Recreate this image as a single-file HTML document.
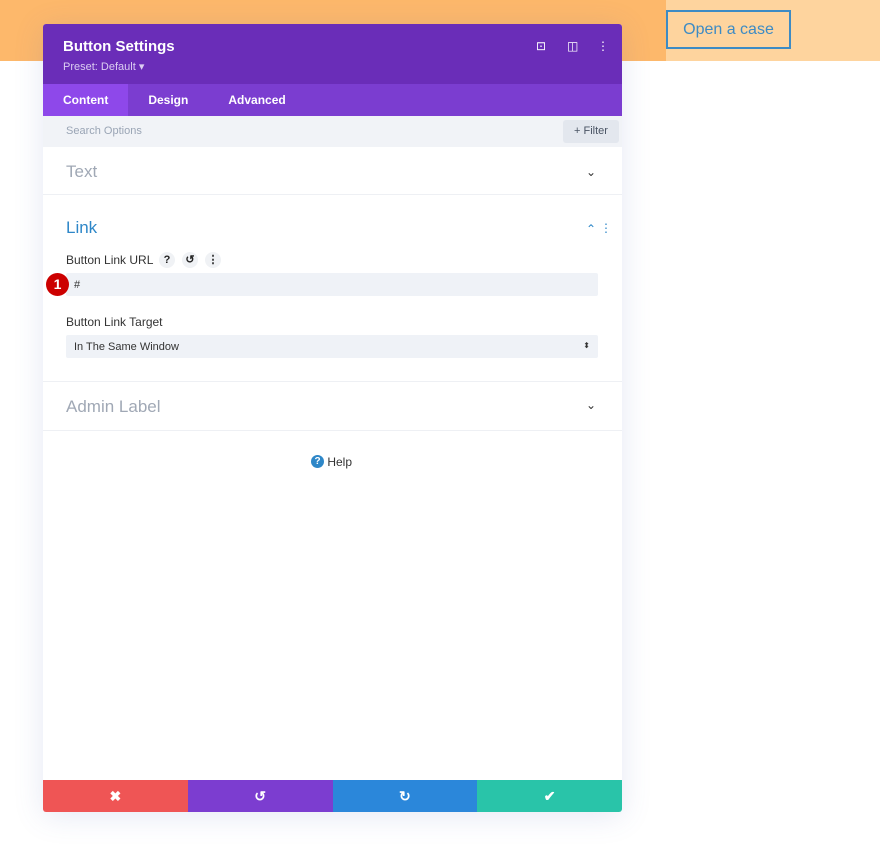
<!DOCTYPE html>
<html><head><style>
*{margin:0;padding:0;box-sizing:border-box}
body{width:880px;height:853px;background:#fff;font-family:"Liberation Sans",sans-serif;position:relative;overflow:hidden}
.top{position:absolute;left:0;top:0;width:666px;height:61px;background:#fdb86b}
.topr{position:absolute;left:666px;top:0;width:214px;height:61px;background:#fed49e}
.case{position:absolute;left:666px;top:10px;width:125px;height:39px;border:2px solid #3d8bc4;color:#3d8bc4;font-size:16px;text-align:center;line-height:35px}
.panel{position:absolute;left:43px;top:24px;width:579px;height:788px;background:#fff;box-shadow:0 4px 30px rgba(80,100,180,.15);border-radius:3px;overflow:hidden}
.hd{height:60px;background:#6a2db8;color:#fff;padding:14px 20px;position:relative}
.hd h1{font-size:15px;font-weight:bold}
.hd p{font-size:11px;color:#dccdf2;margin-top:5px}
.hi{position:absolute;top:15px;font-size:12px;color:#fff}
.tabs{height:32px;background:#7b3dd0;display:flex;color:#fff;font-size:12px;font-weight:bold}
.tabs div{padding:0 20px;line-height:32px}
.tabs .a{background:#8e48ea}
.search{height:31px;background:#f1f3f7;position:relative;font-size:11px;color:#9aa5b5;padding:9px 23px}
.filter{position:absolute;right:3px;top:4px;width:56px;height:23px;background:#e3e7ee;border-radius:3px;color:#4a5464;font-size:11px;line-height:23px;text-align:center}
.sec{position:absolute;left:0;width:579px;border-bottom:1px solid #eef0f4}
.st{position:absolute;left:23px;font-size:17px;color:#a0a8b5}
.chev{position:absolute;right:26px;font-size:12px;color:#333}
.lbl{position:absolute;left:23px;font-size:12px;color:#333}
.inp{position:absolute;left:23px;width:532px;height:23px;background:#eff2f7;border-radius:2px;font-size:11px;color:#333;padding:6px 8px}
.ic{position:absolute;width:16px;height:16px;border-radius:50%;background:#f0f2f5;font-size:11px;font-weight:bold;text-align:center;line-height:16px;color:#222}
.btns{position:absolute;bottom:0;left:0;width:579px;height:32px;display:flex;color:#fff;font-size:14px;font-weight:bold}
.btns div{flex:1;text-align:center;line-height:32px}
</style></head><body>
<div class="top"></div><div class="topr"></div>
<div class="case">Open a case</div>
<div class="panel">
<div class="hd"><h1>Button Settings</h1><p>Preset: Default ▾</p>
<span class="hi" style="left:493px">⊡</span><span class="hi" style="left:524px">◫</span><span class="hi" style="left:554px">⋮</span></div>
<div class="tabs"><div class="a">Content</div><div>Design</div><div>Advanced</div></div>
<div class="search">Search Options<div class="filter">+ Filter</div></div>
<div class="sec" style="top:123px;height:48px"><div class="st" style="top:15px">Text</div><div class="chev" style="top:18px">⌄</div></div>
<div class="st" style="top:194px;color:#2e87c8">Link</div>
<div class="chev" style="top:198px;color:#2e87c8">⌃</div>
<div style="position:absolute;right:10px;top:197px;color:#2e87c8;font-size:12px">⋮</div>
<div class="lbl" style="top:229px">Button Link URL</div>
<div class="ic" style="left:116px;top:228px">?</div><div class="ic" style="left:139px;top:228px">↺</div><div class="ic" style="left:162px;top:228px">⋮</div>
<div class="inp" style="top:249px">#</div>
<div style="position:absolute;left:3px;top:249px;width:23px;height:23px;border-radius:50%;background:#c00;color:#fff;font-weight:bold;font-size:14px;text-align:center;line-height:23px">1</div>
<div class="lbl" style="top:291px">Button Link Target</div>
<div class="inp" style="top:311px">In The Same Window<span style="position:absolute;right:8px;font-size:8px">⬍</span></div>
<div class="sec" style="top:357px;height:50px;border-top:1px solid #eef0f4"><div class="st" style="top:15px">Admin Label</div><div class="chev" style="top:16px">⌄</div></div>
<div style="position:absolute;left:268px;top:431px;font-size:12px;color:#333;line-height:14px"><span style="display:inline-block;width:13px;height:13px;border-radius:50%;background:#2e87c8;color:#fff;font-size:10px;text-align:center;line-height:13px;font-weight:bold;vertical-align:top">?</span> Help</div>
<div class="btns"><div style="background:#ef5555">✖</div><div style="background:#7c3dd0">↺</div><div style="background:#2b87da">↻</div><div style="background:#29c4a9">✔</div></div>
</div>
</body></html>
